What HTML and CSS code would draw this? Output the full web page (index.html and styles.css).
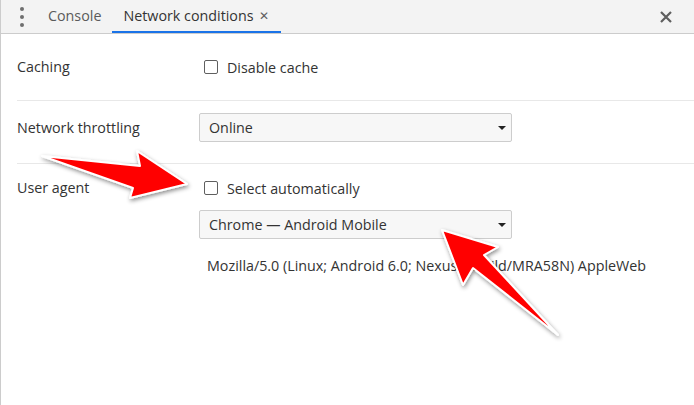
FILE: index.html
```html
<!DOCTYPE html>
<html lang="en">

<head>
    <meta charset="UTF-8">
    <meta name="viewport" content="width=device-width, initial-scale=1.0">
    <title>Network conditions</title>
    <link rel="stylesheet" href="styles.css">
</head>

<body>
    <div class="drawer">
        <div class="tabbar">
            <div class="kebab">
                <span></span><span></span><span></span>
            </div>
            <div class="tab">Console</div>
            <div class="tab active">Network conditions <span class="tab-close">&#x2715;</span></div>
            <div class="spacer"></div>
            <div class="drawer-close">
                <svg width="14" height="14" viewBox="0 0 14 14">
                    <path d="M2 2 L12 12 M12 2 L2 12" stroke="#5f5f5f" stroke-width="2.2" />
                </svg>
            </div>
        </div>

        <div class="panel">
            <div class="row row-cache">
                <div class="label">Caching</div>
                <div class="field">
                    <label class="check"><span class="box"></span>Disable cache</label>
                </div>
            </div>
            <div class="row row-throttle">
                <div class="label">Network throttling</div>
                <div class="field">
                    <div class="select">Online<span class="caret"></span></div>
                </div>
            </div>
            <div class="row row-agent">
                <div class="label">User agent</div>
                <div class="field">
                    <label class="check"><span class="box"></span>Select automatically</label>
                    <div class="select select-ua">Chrome — Android Mobile<span class="caret"></span></div>
                    <div class="ua-string">Mozilla/5.0 (Linux; Android 6.0; Nexus 5 Build/MRA58N) AppleWeb</div>
                </div>
            </div>
        </div>

        <!-- annotation arrows drawn over the screenshot -->
        <svg class="arrows" width="694" height="405" viewBox="0 0 694 405">
            <defs>
                <filter id="shadow" x="-20%" y="-20%" width="140%" height="140%">
                    <feDropShadow dx="1" dy="2" stdDeviation="2" flood-color="#000" flood-opacity="0.45" />
                </filter>
            </defs>
            <polygon points="42,156 140,166 137,151 187,184 130,198 133,188"
                fill="#ff0000" stroke="#fff" stroke-width="2" stroke-linejoin="round" filter="url(#shadow)" />
            <polygon points="442,230 498,247 484,255 558,335 473,268 463,285"
                fill="#ff0000" stroke="#fff" stroke-width="2" stroke-linejoin="round" filter="url(#shadow)" />
        </svg>
    </div>
</body>

</html>
```

FILE: styles.css
```css
* {
    margin: 0;
    padding: 0;
    box-sizing: border-box;
}

body {
    background-color: #fff;
    font-family: "Open Sans", "Noto Sans", sans-serif;
    font-size: 14.3px;
    color: #333;
}

.drawer {
    position: relative;
    width: 694px;
    height: 405px;
    border-left: 1px solid #ccc;
    overflow: hidden;
}

.tabbar {
    display: flex;
    align-items: stretch;
    height: 34px;
    background-color: #f3f3f3;
    border-bottom: 1px solid #ccc;
}

.kebab {
    display: flex;
    flex-direction: column;
    justify-content: center;
    gap: 4px;
    width: 43px;
    padding-left: 19px;
}

.kebab span {
    display: block;
    width: 4px;
    height: 4px;
    border-radius: 50%;
    background-color: #6e6e6e;
}

.tab {
    display: flex;
    align-items: center;
    padding: 0 11px 2px 4px;
    color: #5a5a5a;
    white-space: nowrap;
}

.tab.active {
    padding: 0 12px 0 11px;
    color: #333;
    border-bottom: 2px solid #1a73e8;
}

.tab-close {
    margin-left: 5px;
    font-size: 12px;
    color: #5f5f5f;
}

.spacer {
    flex: 1;
}

.drawer-close {
    display: flex;
    align-items: center;
    width: 35px;
}

.row {
    display: flex;
    margin-left: 16px;
    border-bottom: 1px solid #e8e8e8;
}

.row-cache {
    padding: 22px 0;
}

.row-throttle {
    padding: 12px 0 21px;
}

.row-agent {
    padding: 13px 0;
    border-bottom: 0;
}

.label {
    width: 182px;
    line-height: 22px;
}

.row-throttle .label {
    line-height: 29px;
}

.field {
    display: flex;
    flex-direction: column;
    align-items: flex-start;
}

.check {
    display: flex;
    align-items: center;
    height: 22px;
    padding-left: 5px;
}

.box {
    width: 14px;
    height: 14px;
    margin-right: 9px;
    border: 1px solid #5f5f5f;
    border-radius: 2px;
    background-color: #fff;
}

.select {
    position: relative;
    width: 313px;
    height: 29px;
    padding-left: 9px;
    line-height: 27px;
    border: 1px solid #cdcdcd;
    border-radius: 2px;
    background-color: #f7f7f7;
}

.select-ua {
    margin-top: 11px;
}

.caret {
    position: absolute;
    right: 5px;
    top: 12px;
    border-left: 4px solid transparent;
    border-right: 4px solid transparent;
    border-top: 4px solid #222;
}

.ua-string {
    margin-top: 16px;
    padding-left: 8px;
    line-height: 22px;
    white-space: nowrap;
}

.arrows {
    position: absolute;
    left: -1px;
    top: 0;
}
```
